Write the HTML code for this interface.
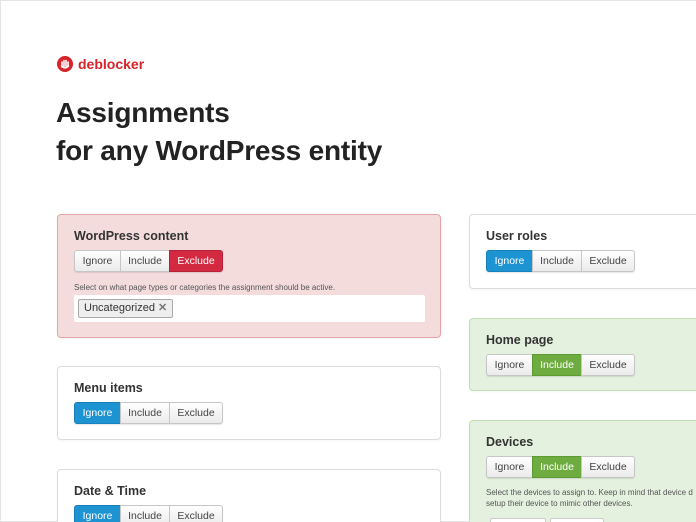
<!DOCTYPE html>
<html><head><meta charset="utf-8"><style>
*{box-sizing:border-box;margin:0;padding:0}
html,body{width:696px;height:522px;overflow:hidden}
body{background:#fff;font-family:"Liberation Sans",sans-serif;position:relative}
.frame{position:absolute;left:0;top:0;width:696px;height:522px;border:1px solid #e4e4e4;border-right:none}
.logo{position:absolute;left:57px;top:56px;display:flex;align-items:center;gap:5px;color:#d8232a;font-weight:bold;font-size:14px}
.logo .c{width:16px;height:16px;border-radius:50%;background:#d8232a;position:relative}
.h{position:absolute;left:56px;top:94px;font-size:28px;line-height:38px;color:#222;font-weight:bold;letter-spacing:-0.2px}
.card{position:absolute;border:1px solid #dcdcdc;border-radius:4px;background:#fff;box-shadow:0 1px 2px rgba(0,0,0,.04)}
.card.red{background:#f4dcdd;border-color:#e6a3a8}
.card.green{background:#e4f1de;border-color:#c1dfb2}
.t{position:absolute;left:16px;top:14px;font-size:12.5px;font-weight:bold;color:#333}
.bg{position:absolute;left:16px;top:35px;display:flex;height:22px;border-radius:3px;box-shadow:0 1px 1px rgba(0,0,0,.1)}
.bg span{display:block;height:22px;line-height:20px;font-size:10.5px;color:#444;border:1px solid #c6c6c6;background:linear-gradient(#fff,#ebebeb);text-align:center;margin-left:-1px}
.bg span:first-child{border-radius:3px 0 0 3px;margin-left:0;width:47px}
.bg span:nth-child(2){width:50px}
.bg span:last-child{border-radius:0 3px 3px 0;width:54px}
.bg .blue{background:#1d93d1;border-color:#1681ba;color:#fff}
.bg .grn{background:#6eac3f;border-color:#5e9a32;color:#fff}
.bg .rd{background:#d32a41;border-color:#b8213a;color:#fff}
.d{position:absolute;left:16px;font-size:8px;color:#555;line-height:11px}
</style></head><body>
<div class="frame"></div>
<div class="logo"><div class="c"><svg width="16" height="16" viewBox="0 0 16 16"><path d="M5 11 L5 6 M7 10 L7 4.5 M9 10 L9 4.5 M11 10 L11 6 M4.5 10 Q8 13.5 11.5 10" stroke="#fff" stroke-width="1.6" fill="none" stroke-linecap="round"/></svg></div>deblocker</div>
<div class="h">Assignments<br>for any WordPress entity</div>

<div class="card red" style="left:57px;top:214px;width:384px;height:124px">
<div class="t">WordPress content</div>
<div class="bg"><span>Ignore</span><span>Include</span><span class="rd">Exclude</span></div>
<div class="d" style="top:67px">Select on what page types or categories the assignment should be active.</div>
<div style="position:absolute;left:16px;top:80px;width:351px;height:27px;background:#fff;border-radius:2px">
<div style="position:absolute;left:4px;top:4px;height:19px;padding:0 5px;border:1px solid #aaa;border-radius:2px;background:#eee;font-size:11px;line-height:17px;color:#333">Uncategorized <b style="color:#777">✕</b></div></div>
</div>

<div class="card" style="left:57px;top:366px;width:384px;height:74px">
<div class="t">Menu items</div>
<div class="bg"><span class="blue">Ignore</span><span>Include</span><span>Exclude</span></div></div>

<div class="card" style="left:57px;top:469px;width:384px;height:70px">
<div class="t">Date &amp; Time</div>
<div class="bg"><span class="blue">Ignore</span><span>Include</span><span>Exclude</span></div></div>

<div class="card" style="left:469px;top:214px;width:240px;height:75px">
<div class="t">User roles</div>
<div class="bg"><span class="blue">Ignore</span><span>Include</span><span>Exclude</span></div></div>

<div class="card green" style="left:469px;top:318px;width:240px;height:73px">
<div class="t">Home page</div>
<div class="bg"><span>Ignore</span><span class="grn">Include</span><span>Exclude</span></div></div>

<div class="card green" style="left:469px;top:420px;width:240px;height:120px">
<div class="t">Devices</div>
<div class="bg"><span>Ignore</span><span class="grn">Include</span><span>Exclude</span></div>
<div class="d" style="top:66px;white-space:nowrap">Select the devices to assign to. Keep in mind that device d<br>setup their device to mimic other devices.</div>
<div style="position:absolute;left:20px;top:97px;width:56px;height:10px;border:1px solid #ccc;background:#fff;border-radius:2px"></div>
<div style="position:absolute;left:80px;top:97px;width:54px;height:10px;border:1px solid #ccc;background:#fff;border-radius:2px"></div>
</div>
</body></html>
